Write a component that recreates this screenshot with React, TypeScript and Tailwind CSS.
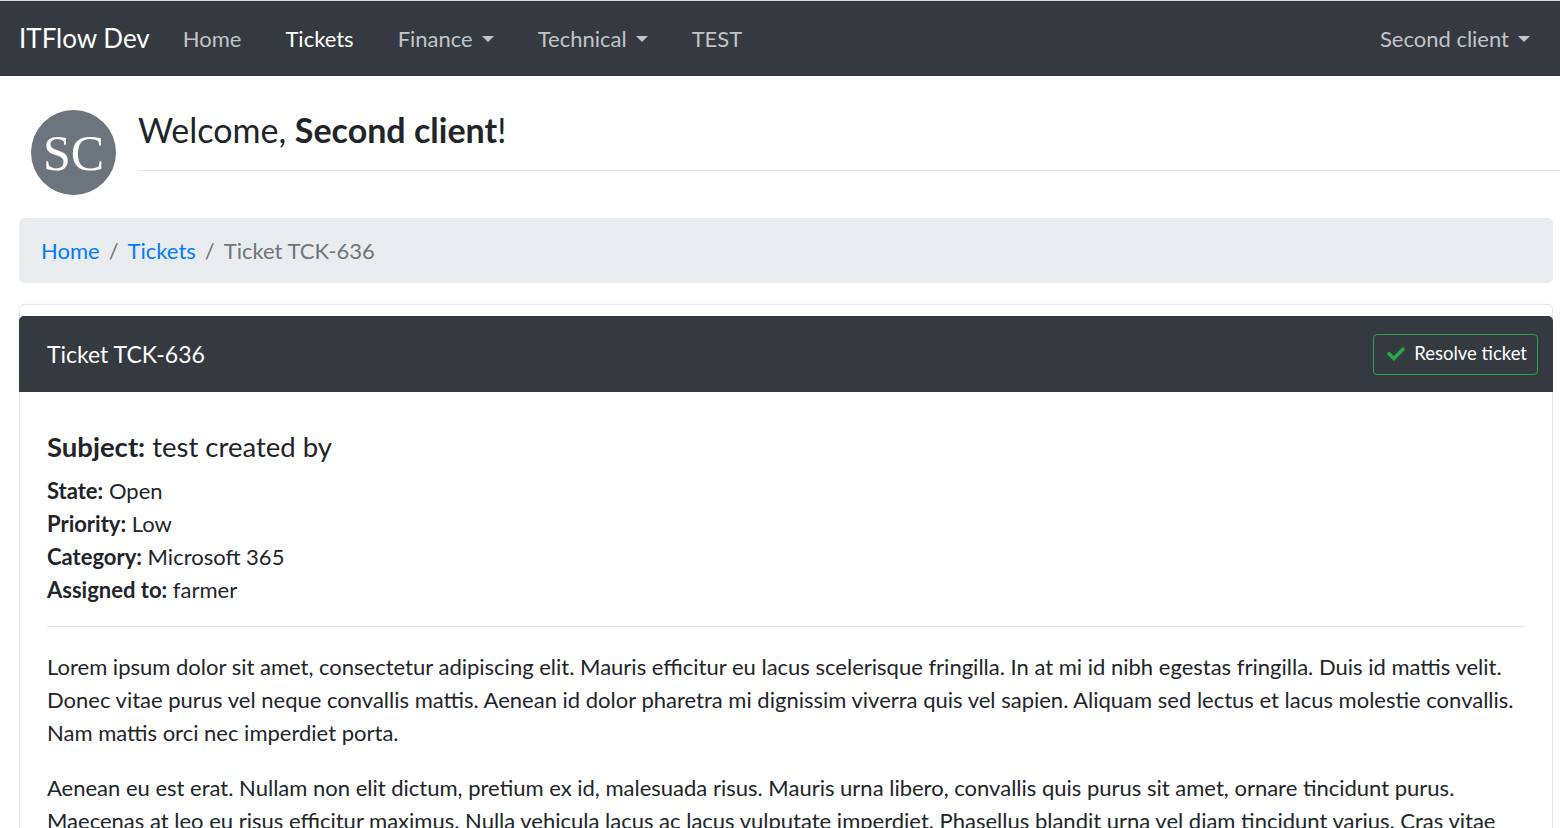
import { FaCheck } from "react-icons/fa";

const Caret = () => (
  <span className="ml-[9px] inline-block h-0 w-0 border-x-[6px] border-t-[6px] border-x-transparent border-t-current align-middle" />
);

const NavLink = ({ label, active, dropdown }: { label: string; active?: boolean; dropdown?: boolean }) => (
  <a
    href="#"
    className={`flex items-center px-[22px] ${active ? "text-white" : "text-[#c2c4c6]"}`}
  >
    {label}
    {dropdown && <Caret />}
  </a>
);

const App = () => {
  return (
    <div className="min-h-screen bg-white text-[#212529] text-[22px] leading-[1.5]" style={{ fontFamily: "Lato, 'Open Sans', sans-serif" }}>
      {/* Navbar */}
      <nav className="flex h-[76px] items-center border-t border-[#d9d9d9] bg-[#343a40] pl-[19px] pr-[8px]">
        <a href="#" className="mr-[11px] text-[26px] text-white">ITFlow Dev</a>
        <div className="flex items-center">
          <NavLink label="Home" />
          <NavLink label="Tickets" active />
          <NavLink label="Finance" dropdown />
          <NavLink label="Technical" dropdown />
          <NavLink label="TEST" />
        </div>
        <div className="ml-auto">
          <NavLink label="Second client" dropdown />
        </div>
      </nav>

      {/* Welcome */}
      <div className="flex pt-[34px]">
        <div className="ml-[31px] flex h-[85px] w-[85px] shrink-0 items-center justify-center rounded-full bg-[#6c757d] text-[50px] leading-none text-white" style={{ fontFamily: "'Liberation Serif', serif" }}>
          SC
        </div>
        <div className="ml-[22px] flex-1 self-start">
          <h3 className="border-b border-[#e3e5e7] pb-[19px] text-[34px] leading-[1.2]">
            Welcome, <strong className="font-bold">Second client</strong>!
          </h3>
        </div>
      </div>

      <div className="pl-[19px] pr-[7px]">
        {/* Breadcrumb */}
        <ol className="mt-[23px] flex h-[65px] items-center rounded-[5px] bg-[#e9ecef] px-[22px]">
          <li><a href="#" className="text-[#007bff]">Home</a></li>
          <li className="px-[9px] text-[#6c757d]">/</li>
          <li><a href="#" className="text-[#007bff]">Tickets</a></li>
          <li className="px-[9px] text-[#6c757d]">/</li>
          <li className="text-[#6c757d]">Ticket TCK-636</li>
        </ol>

        {/* Card */}
        <div className="mt-[21px] rounded-[5px] border border-[#e6e6e6] pt-[11px] shadow-[0_0_2px_rgba(0,0,0,0.06)]">
          <div className="-mx-px flex h-[76px] items-center rounded-t-[5px] bg-[#343a40] pl-[28px] pr-[15px]">
            <h3 className="text-[23px] text-white">Ticket TCK-636</h3>
            <button className="ml-auto flex h-[41px] items-center rounded-[4px] border border-[#28a745] pl-[13px] pr-[10px] text-[18.5px] text-white">
              <FaCheck className="mr-[9px] text-[18px] text-[#28a745]" />
              Resolve ticket
            </button>
          </div>
          <div className="px-[27px] pb-[40px] pt-[38px]">
            <h5 className="mb-[11px] text-[27.5px] leading-[1.2]">
              <strong className="font-bold">Subject:</strong> test created by
            </h5>
            <div><strong className="font-bold">State:</strong> Open</div>
            <div><strong className="font-bold">Priority:</strong> Low</div>
            <div><strong className="font-bold">Category:</strong> Microsoft 365</div>
            <div><strong className="font-bold">Assigned to:</strong> farmer</div>
            <hr className="mb-[23px] mt-[20px] border-[#e3e5e7]" />
            <p className="mb-[22px]">
              Lorem ipsum dolor sit amet, consectetur adipiscing elit. Mauris efficitur eu lacus scelerisque fringilla. In at mi id nibh egestas fringilla. Duis id mattis velit. Donec vitae purus vel neque convallis mattis. Aenean id dolor pharetra mi dignissim viverra quis vel sapien. Aliquam sed lectus et lacus molestie convallis. Nam mattis orci nec imperdiet porta.
            </p>
            <p className="mb-[22px]">
              Aenean eu est erat. Nullam non elit dictum, pretium ex id, malesuada risus. Mauris urna libero, convallis quis purus sit amet, ornare tincidunt purus. Maecenas at leo eu risus efficitur maximus. Nulla vehicula lacus ac lacus vulputate imperdiet. Phasellus blandit urna vel diam tincidunt varius. Cras vitae nisl vel ligula facilisis sagittis.
            </p>
          </div>
        </div>
      </div>
    </div>
  );
};

export default App;
